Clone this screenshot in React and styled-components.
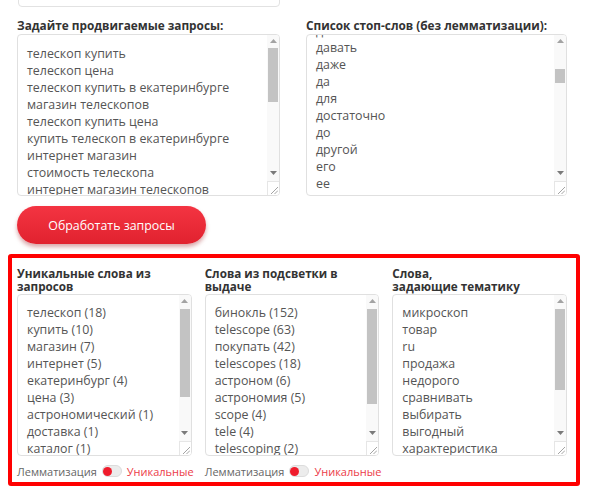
import React from "react";
import styled, { createGlobalStyle } from "styled-components";

const GlobalStyle = createGlobalStyle`
  html, body {
    margin: 0;
    padding: 0;
    background: #fff;
    font-family: "Open Sans", "Noto Sans", Arial, sans-serif;
    overflow: hidden;
  }
`;

const queries = [
  "телескоп купить",
  "телескоп цена",
  "телескоп купить в екатеринбурге",
  "магазин телескопов",
  "телескоп купить цена",
  "купить телескоп в екатеринбурге",
  "интернет магазин",
  "стоимость телескопа",
  "интернет магазин телескопов",
  "телескоп для начинающих",
];

const stopWords = [
  "д",
  "давать",
  "даже",
  "да",
  "для",
  "достаточно",
  "до",
  "другой",
  "его",
  "ее",
  "если",
];

const results = [
  {
    title: ["Уникальные слова из", "запросов"],
    items: [
      "телескоп (18)",
      "купить (10)",
      "магазин (7)",
      "интернет (5)",
      "екатеринбург (4)",
      "цена (3)",
      "астрономический (1)",
      "доставка (1)",
      "каталог (1)",
      "начинающий (1)",
    ],
    thumb: 88,
    toggle: true,
  },
  {
    title: ["Слова из подсветки в", "выдаче"],
    items: [
      "бинокль (152)",
      "telescope (63)",
      "покупать (42)",
      "telescopes (18)",
      "астроном (6)",
      "астрономия (5)",
      "scope (4)",
      "tele (4)",
      "telescoping (2)",
      "оптика (2)",
    ],
    thumb: 95,
    toggle: true,
  },
  {
    title: ["Слова,", "задающие тематику"],
    items: [
      "микроскоп",
      "товар",
      "ru",
      "продажа",
      "недорого",
      "сравнивать",
      "выбирать",
      "выгодный",
      "характеристика",
      "цена",
    ],
    thumb: 81,
    toggle: false,
  },
];

function Scrollbar({ thumbTop, thumbHeight }) {
  return (
    <Bar>
      <Arrow>
        <svg width="7" height="4" viewBox="0 0 7 4">
          <path d="M0 4 L3.5 0 L7 4 Z" fill="#a3a3a3" />
        </svg>
      </Arrow>
      <Track>
        <Thumb $top={thumbTop} $height={thumbHeight} />
      </Track>
      <Arrow>
        <svg width="7" height="4" viewBox="0 0 7 4">
          <path d="M0 0 L7 0 L3.5 4 Z" fill="#7a7a7a" />
        </svg>
      </Arrow>
      <Resizer>
        <svg width="8" height="8" viewBox="0 0 8 8">
          <path d="M1 8 L8 1 M4.5 8 L8 4.5" stroke="#9a9a9a" strokeWidth="0.9" />
        </svg>
      </Resizer>
    </Bar>
  );
}

function TextBox({ lines, padTop, shift, thumbTop, thumbHeight }) {
  return (
    <Box>
      <Content $padTop={padTop}>
        <Lines $shift={shift}>
          {lines.map((l, i) => (
            <Line key={i}>{l}</Line>
          ))}
        </Lines>
      </Content>
      <Scrollbar thumbTop={thumbTop} thumbHeight={thumbHeight} />
    </Box>
  );
}

function Toggle() {
  return (
    <ToggleRow>
      <span>Лемматизация</span>
      <Switch>
        <Knob />
      </Switch>
      <Accent>Уникальные</Accent>
    </ToggleRow>
  );
}

export default function App() {
  return (
    <Page>
      <GlobalStyle />
      <Top>
        <TopInput />
        <TwoCols>
          <div>
            <Label>Задайте продвигаемые запросы:</Label>
            <TextBox
              lines={queries}
              padTop={10}
              shift={0}
              thumbTop={1}
              thumbHeight={54}
            />
          </div>
          <div>
            <Label>Список стоп-слов (без лемматизации):</Label>
            <TextBox
              lines={stopWords}
              padTop={0}
              shift={-13}
              thumbTop={22}
              thumbHeight={14}
            />
          </div>
        </TwoCols>
        <SubmitButton>Обработать запросы</SubmitButton>
      </Top>

      <ResultPanel>
        {results.map((col, i) => (
          <Column key={i}>
            <ColTitle>
              {col.title[0]}
              <br />
              {col.title[1]}
            </ColTitle>
            <TextBox
              lines={col.items}
              padTop={9}
              shift={0}
              thumbTop={2}
              thumbHeight={col.thumb}
            />
            {col.toggle && <Toggle />}
          </Column>
        ))}
      </ResultPanel>
    </Page>
  );
}

const Page = styled.div`
  width: 600px;
  height: 502px;
  padding-left: 8px;
  box-sizing: border-box;
  overflow: hidden;
`;

const Top = styled.div`
  padding-left: 9px;
`;

const TopInput = styled.div`
  width: 262px;
  height: 40px;
  margin-top: -33px;
  margin-left: 1px;
  border: 1px solid #e2e2e2;
  border-radius: 4px;
  box-sizing: border-box;
`;

const TwoCols = styled.div`
  display: grid;
  grid-template-columns: 263px 261px;
  column-gap: 26px;
  margin-top: 9px;
`;

const Label = styled.div`
  font-size: 11.8px;
  font-weight: 700;
  line-height: 18px;
  color: #333;
  white-space: nowrap;
`;

const Box = styled.div`
  display: flex;
  height: 162px;
  border: 1px solid #e0e0e0;
  border-radius: 4px;
  box-sizing: border-box;
  background: #fff;
  overflow: hidden;
`;

const Content = styled.div`
  flex: 1;
  overflow: hidden;
  padding: ${(p) => p.$padTop}px 0 0 9px;
`;

const Lines = styled.div`
  margin-top: ${(p) => p.$shift}px;
`;

const Line = styled.div`
  font-size: 12.4px;
  line-height: 17px;
  color: #555;
  white-space: nowrap;
`;

const Bar = styled.div`
  width: 12px;
  flex-shrink: 0;
  display: flex;
  flex-direction: column;
  background: #f9f9f9;
`;

const Arrow = styled.div`
  height: 12px;
  display: flex;
  align-items: center;
  justify-content: center;
`;

const Track = styled.div`
  flex: 1;
`;

const Thumb = styled.div`
  margin-top: ${(p) => p.$top}px;
  margin-left: 1px;
  width: 10px;
  height: ${(p) => p.$height}px;
  background: #c3c3c3;
`;

const Resizer = styled.div`
  height: 14px;
  margin-top: 2px;
  box-sizing: border-box;
  border-top: 1px solid #e6e6e6;
  border-left: 1px solid #e6e6e6;
  background: #fff;
  display: flex;
  align-items: flex-end;
  justify-content: flex-end;
  padding: 0 1px 1px 0;
`;

const SubmitButton = styled.button`
  display: block;
  margin-top: 10px;
  width: 189px;
  height: 38px;
  border: none;
  border-radius: 19px;
  background: linear-gradient(180deg, #f43442 0%, #e1222f 100%);
  box-shadow: 0 3px 4px rgba(150, 0, 10, 0.35);
  color: #fff;
  font-family: "Open Sans", Arial, sans-serif;
  font-size: 12.4px;
  padding: 0;
`;

const ResultPanel = styled.div`
  margin-top: 10px;
  width: 572px;
  box-sizing: border-box;
  border: 4px solid #ff0000;
  border-radius: 3px;
  padding: 9px 9px 3px 5px;
  display: grid;
  grid-template-columns: repeat(3, 1fr);
  column-gap: 13px;
  align-items: start;
`;

const Column = styled.div`
  display: flex;
  flex-direction: column;
  min-width: 0;
`;

const ColTitle = styled.div`
  font-size: 11.7px;
  font-weight: 700;
  line-height: 13px;
  margin-bottom: 1px;
  color: #333;
  white-space: nowrap;
`;

const ToggleRow = styled.div`
  display: flex;
  align-items: center;
  height: 16px;
  margin-top: 7px;
  font-size: 11px;
  color: #666;
  white-space: nowrap;
`;

const Switch = styled.div`
  width: 20px;
  height: 12px;
  flex-shrink: 0;
  margin: 0 5px 0 5px;
  border-radius: 6px;
  background: #ececec;
  border: 1px solid #dcdcdc;
  box-sizing: border-box;
  display: flex;
  align-items: center;
`;

const Knob = styled.div`
  width: 9px;
  height: 9px;
  border-radius: 50%;
  background: #ef1c2c;
`;

const Accent = styled.span`
  color: #ec3b48;
`;
